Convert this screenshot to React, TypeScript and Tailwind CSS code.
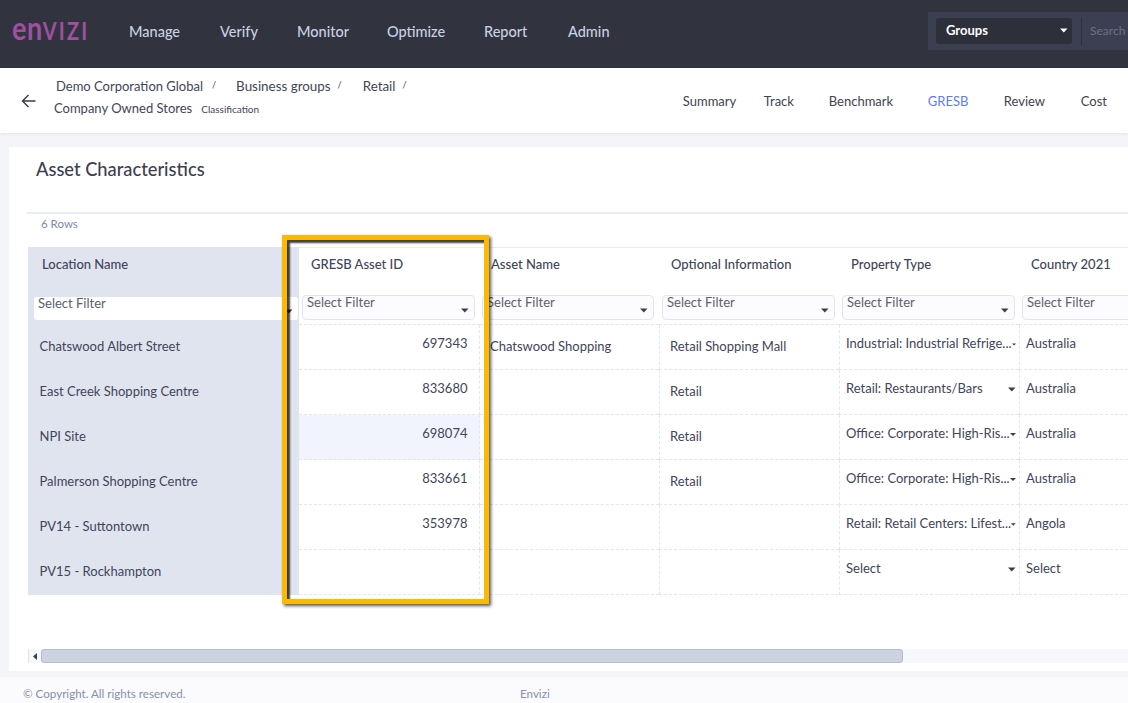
const NAV = ['Manage', 'Verify', 'Monitor', 'Optimize', 'Report', 'Admin'];
const TABS = ['Summary', 'Track', 'Benchmark', 'GRESB', 'Review', 'Cost'];
const HEADERS = ['GRESB Asset ID', 'Asset Name', 'Optional Information', 'Property Type', 'Country 2021'];
const FILTER_PADDING = ['pl-[3px] pr-[5px]', 'pl-[2px] pr-[5px]', 'pl-[3px] pr-[4px]', 'pl-[3px] pr-[4px]', 'pl-[3px] pr-[4px]'];

const ROWS = [
  { name: 'Chatswood Albert Street', id: '697343', asset: 'Chatswood Shopping', info: 'Retail Shopping Mall', type: 'Industrial: Industrial Refrige...', country: 'Australia' },
  { name: 'East Creek Shopping Centre', id: '833680', asset: '', info: 'Retail', type: 'Retail: Restaurants/Bars', country: 'Australia' },
  { name: 'NPI Site', id: '698074', asset: '', info: 'Retail', type: 'Office: Corporate: High-Ris...', country: 'Australia' },
  { name: 'Palmerson Shopping Centre', id: '833661', asset: '', info: 'Retail', type: 'Office: Corporate: High-Ris...', country: 'Australia' },
  { name: 'PV14 - Suttontown', id: '353978', asset: '', info: '', type: 'Retail: Retail Centers: Lifest...', country: 'Angola' },
  { name: 'PV15 - Rockhampton', id: '', asset: '', info: '', type: 'Select', country: 'Select' },
];

// small solid caret used by all the select boxes
function Caret({ className = '' }: { className?: string }) {
  return (
    <svg width="8" height="5" viewBox="0 0 8 5" className={className}>
      <path d="M0 0.5h7.5L3.75 4.5z" fill="currentColor" />
    </svg>
  );
}

function FilterBox({ plain = false }: { plain?: boolean }) {
  return (
    <div
      className={
        plain
          ? 'relative h-[23px] w-full rounded-[3px] bg-white pl-1 text-[13px] leading-[12px] text-[#5c6070]'
          : 'relative h-[25px] w-full rounded-[4px] border border-[#e0e4ef] bg-[#fcfcff] pl-1 text-[13px] leading-[12px] text-[#5c6070]'
      }
    >
      Select Filter
      <Caret className="absolute right-[5px] top-[12px] text-[#3a3d4c]" />
    </div>
  );
}

export default function App() {
  return (
    <div className="relative flex h-[703px] w-[1128px] flex-col overflow-hidden bg-[#f4f5f8] font-['Lato',sans-serif] text-[#41455a]">
      {/* top bar */}
      <header className="flex h-[68px] shrink-0 items-center bg-[#31333f] pl-[12px]">
        <div className="w-[117px] pb-[7px] font-bold leading-none text-[#a050a0]">
          <span className="inline-block origin-bottom scale-y-[1.2] whitespace-nowrap">
            <span className="text-[27px] tracking-[0.5px]">en</span>
            <span className="text-[20px] tracking-[2.2px]">VIZI</span>
          </span>
        </div>
        <nav className="grid grid-cols-[91px_77px_90px_97px_84px_auto] pb-[5px] text-[14.5px] font-medium text-[#c9d1e4]">
          {NAV.map((n) => (
            <span key={n}>{n}</span>
          ))}
        </nav>
        <div className="ml-auto mb-[7px] flex h-[38px] w-[200px] items-center bg-[#3b3f52] pl-[8px]">
          <div className="flex h-[26px] w-[136px] items-center justify-between rounded-[3px] bg-[#2d2f3b] pl-[10px] pr-[4px] text-[13px] font-bold text-white">
            <span>Groups</span>
            <Caret className="text-white" />
          </div>
          <div className="ml-[9px] h-[28px] w-px bg-[#2d2f3b]" />
          <span className="ml-[8px] text-[12px] text-[#6e7282]">Search</span>
        </div>
      </header>

      {/* breadcrumb and tabs */}
      <div className="z-10 flex h-[65px] shrink-0 items-center bg-white pl-[21px] shadow-[0_1px_3px_rgba(0,0,0,0.08)]">
        <svg width="15" height="14" viewBox="0 0 15 14" fill="none" stroke="#3a3d4c" strokeWidth="1.5" className="mr-[18px]">
          <path d="M14.5 7H1.5M7.5 1L1.5 7l6 6" />
        </svg>
        <div className="pb-[6px] text-[13px]">
          <div className="flex h-[23px] items-center pl-[2px]">
            <span>Demo Corporation Global</span>
            <span className="ml-[9px] mb-[3px] text-[9px]">/</span>
            <span className="ml-[20px] text-[13.4px]">Business groups</span>
            <span className="ml-[7px] mb-[3px] text-[9px]">/</span>
            <span className="ml-[21px] text-[13.4px]">Retail</span>
            <span className="ml-[7px] mb-[3px] text-[9px]">/</span>
          </div>
          <div className="flex h-[22px] items-center">
            <span>Company Owned Stores</span>
            <span className="ml-[9px] text-[10px]">Classification</span>
          </div>
        </div>
        <nav className="ml-auto mr-[21px] grid grid-cols-[81px_65px_99px_76px_77px_auto] pt-[3px] text-[13px] text-[#41434f]">
          {TABS.map((t) => (
            <span key={t} className={t === 'GRESB' ? 'text-[#5b7cf7]' : ''}>
              {t}
            </span>
          ))}
        </nav>
      </div>

      {/* card */}
      <main className="ml-[9px] mt-[14px] h-[524px] shrink-0 bg-white">
        <h1 className="flex h-[65px] items-center pb-[20px] pl-[27px] text-[18.3px] font-medium leading-none text-[#3c4050]">Asset Characteristics</h1>
        <div className="ml-[18px] border-t-2 border-[#e8ecf5] pl-[14px] pt-[2px] text-[11.5px] leading-[16px] text-[#7d8bac]">6 Rows</div>

        <div className="ml-[19px] mt-[15px] grid grid-cols-[271px_181px_179px_180px_180px_180px] text-[13px]">
          {/* column headers */}
          <div className="flex h-[47px] items-center bg-[#e0e4ef] pb-[12px] pl-[14px] font-medium">Location Name</div>
          {HEADERS.map((h, i) => (
            <div key={h} className={`flex h-[47px] items-center border-t border-[#e8ecf5] pb-[12px] font-medium ${i === 1 ? 'pl-[11px]' : 'pl-[12px]'}`}>
              {h}
            </div>
          ))}

          {/* filter row */}
          <div className="flex h-[31px] bg-[#e0e4ef] pl-[6px] pr-[1px] pt-[3px]">
            <FilterBox plain />
          </div>
          {FILTER_PADDING.map((p, i) => (
            <div key={i} className={`flex h-[31px] items-start border-b border-dashed border-[#e3e6f0] pt-[1px] ${p}`}>
              <FilterBox />
            </div>
          ))}

          {/* data rows */}
          {ROWS.map((r, i) => (
            <div key={r.name} className="contents">
              <div className="flex h-[45px] items-center bg-[#e0e4ef] pb-[2px] pl-[11.5px]">{r.name}</div>
              <div className={`flex h-[45px] items-center justify-end border-b border-r border-dashed border-[#e3e6f0] pb-[6px] pr-[11.5px] ${i === 2 ? 'bg-[#f1f4fd]' : ''}`}>
                {r.id}
              </div>
              <div className="flex h-[45px] items-center border-b border-dashed border-[#e3e6f0] pl-[10px]">{r.asset}</div>
              <div className="flex h-[45px] items-center border-b border-l border-dashed border-[#e3e6f0] pl-[10px]">{r.info}</div>
              <div className="flex h-[45px] items-center justify-between border-b border-l border-dashed border-[#e3e6f0] pb-[6px] pl-[6px] pr-[3px]">
                <span className="whitespace-nowrap">{r.type}</span>
                <Caret className="text-[#3a3d4c]" />
              </div>
              <div className="flex h-[45px] items-center border-b border-l border-dashed border-[#e3e6f0] pb-[6px] pl-[6px]">{r.country}</div>
            </div>
          ))}
        </div>

        {/* horizontal scrollbar */}
        <div className="ml-[19px] mt-[54px] flex h-[14px] bg-[#f7f8fc]">
          <div className="flex w-[13px] items-center justify-center border-l border-[#e0e4ef]">
            <svg width="4" height="7" viewBox="0 0 4 7">
              <path d="M4 0v7L0 3.5z" fill="#3a3d4c" />
            </svg>
          </div>
          <div className="h-[14px] w-[862px] rounded-[3px] border border-[#b9bdca] bg-[#ccd2e2]" />
        </div>
      </main>

      {/* footer */}
      <footer className="mt-[6px] flex h-[26px] flex-1 items-center bg-[#fbfbfe] pl-[23px] pt-[7px] text-[11.6px] text-[#8490ad]">
        <span className="w-[497px]">© Copyright. All rights reserved.</span>
        <span>Envizi</span>
      </footer>

      {/* yellow call-out around the GRESB column */}
      <div className="absolute left-[282px] top-[235px] h-[369px] w-[207px] border-[5px] border-[#fdb900] shadow-[2px_2px_3px_rgba(0,0,0,0.65),inset_3px_3px_2px_rgba(0,0,0,0.75)]" />
    </div>
  );
}
